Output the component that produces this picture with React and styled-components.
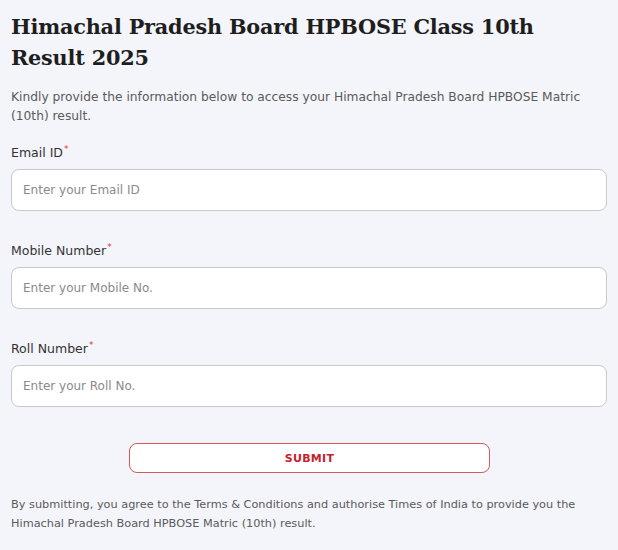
import React from "react";
import styled, { createGlobalStyle } from "styled-components";

const Global = createGlobalStyle`
  html, body { margin: 0; padding: 0; background: #f4f5fa; }
  body { font-family: "DejaVu Sans", Verdana, sans-serif; }
`;

const Page = styled.div`
  padding: 11px 11px 0 11px;
  width: 596px;
  display: flex;
  flex-direction: column;
`;

const Title = styled.h1`
  margin: 0;
  font-family: "DejaVu Serif", Georgia, serif;
  font-weight: 700;
  font-size: 20.8px;
  line-height: 31px;
  color: #1e1e1e;
  letter-spacing: -0.2px;
`;

const Intro = styled.p`
  margin: 15px 0 0 0;
  font-size: 12.25px;
  line-height: 19px;
  color: #5a5a5a;
`;

const Form = styled.form`
  display: flex;
  flex-direction: column;
  margin-top: 18px;
`;

const Field = styled.div`
  display: flex;
  flex-direction: column;
  gap: 7px;
  margin-bottom: 31px;
`;

const Label = styled.label`
  font-size: 12.5px;
  line-height: 18px;
  color: #333;
`;

const Star = styled.sup`
  color: #e0333a;
  font-size: 9px;
  vertical-align: top;
  line-height: 10px;
  margin-left: 1px;
`;

const Input = styled.input`
  box-sizing: border-box;
  height: 42px;
  width: 100%;
  border: 1px solid #c9c9cc;
  border-radius: 8px;
  background: #fff;
  padding: 0 11px;
  font-family: "DejaVu Sans", Verdana, sans-serif;
  font-size: 12px;
  color: #333;
  outline: none;
  &::placeholder { color: #8a8a8a; }
`;

const ButtonRow = styled.div`
  display: flex;
  justify-content: center;
  margin-top: 5px;
`;

const Submit = styled.button`
  box-sizing: border-box;
  width: 361px;
  height: 30px;
  margin-left: 1px;
  border: 1px solid #d4595b;
  border-radius: 8px;
  background: #fff;
  color: #c8202a;
  font-family: "DejaVu Sans", Verdana, sans-serif;
  font-weight: 700;
  font-size: 11px;
  letter-spacing: 0.3px;
  cursor: pointer;
`;

const Note = styled.p`
  margin: 23px 0 0 0;
  font-size: 11.3px;
  line-height: 18.5px;
  color: #5a5a5a;
`;

const fields = [
  { label: "Email ID", ph: "Enter your Email ID" },
  { label: "Mobile Number", ph: "Enter your Mobile No." },
  { label: "Roll Number", ph: "Enter your Roll No." },
];

export default function App() {
  return (
    <>
      <Global />
      <Page>
        <Title>Himachal Pradesh Board HPBOSE Class 10th Result 2025</Title>
        <Intro>
          Kindly provide the information below to access your Himachal Pradesh Board HPBOSE Matric (10th) result.
        </Intro>
        <Form onSubmit={(e) => e.preventDefault()}>
          {fields.map((f) => (
            <Field key={f.label}>
              <Label>
                {f.label}
                <Star>*</Star>
              </Label>
              <Input placeholder={f.ph} />
            </Field>
          ))}
          <ButtonRow>
            <Submit type="submit">SUBMIT</Submit>
          </ButtonRow>
        </Form>
        <Note>
          By submitting, you agree to the Terms &amp; Conditions and authorise Times of India to provide you the Himachal Pradesh Board HPBOSE Matric (10th) result.
        </Note>
      </Page>
    </>
  );
}
